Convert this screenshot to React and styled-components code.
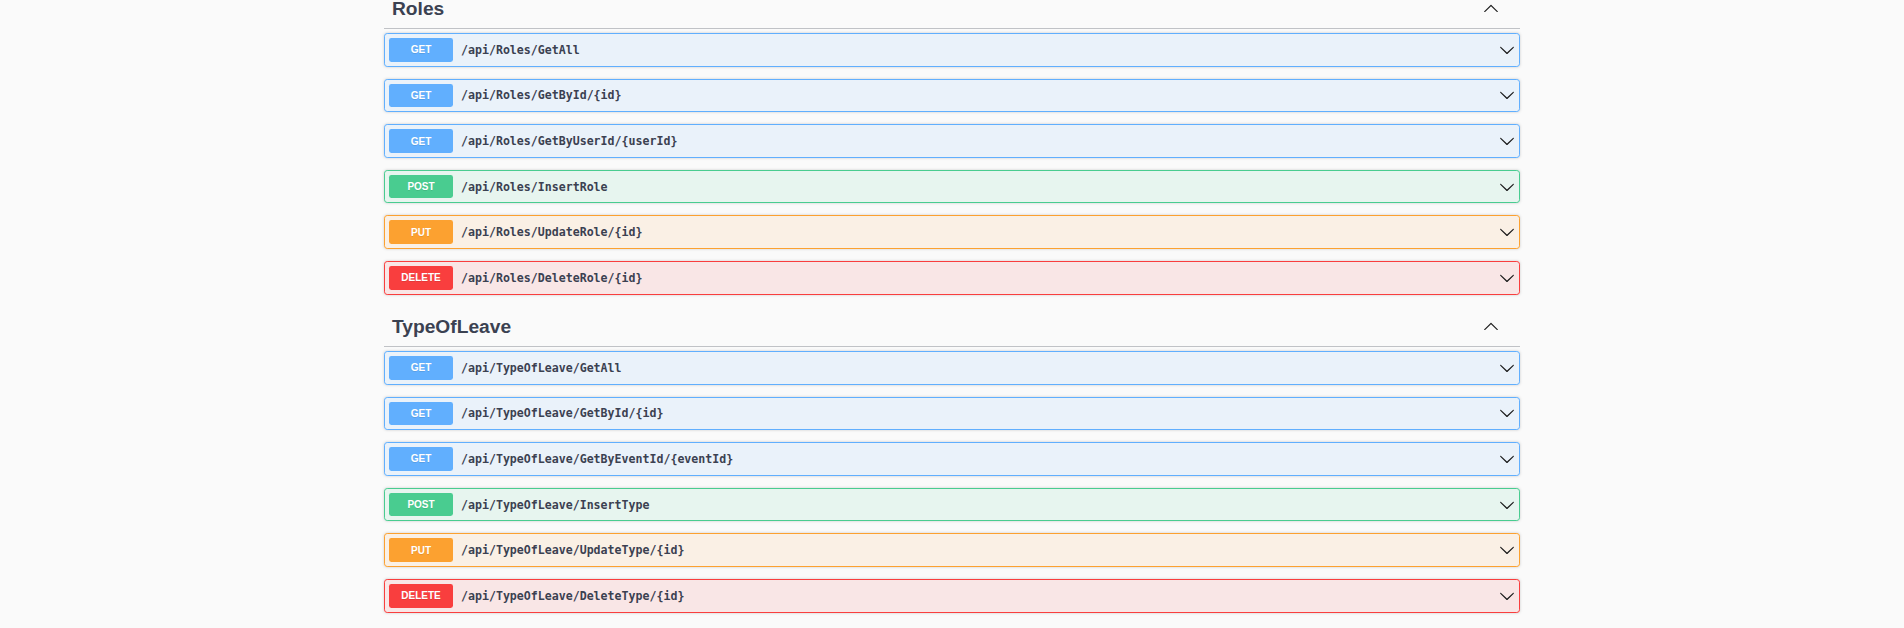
import React from "react";
import styled, { createGlobalStyle } from "styled-components";

const GlobalStyle = createGlobalStyle`
  html, body {
    margin: 0;
    padding: 0;
    background: #fafafa;
    overflow: hidden;
  }
  * { box-sizing: border-box; }
`;

const METHODS = {
  GET: { main: "#61affe", bg: "rgba(97,175,254,.1)" },
  POST: { main: "#49cc90", bg: "rgba(73,204,144,.1)" },
  PUT: { main: "#fca130", bg: "rgba(252,161,48,.1)" },
  DELETE: { main: "#f93e3e", bg: "rgba(249,62,62,.1)" },
};

const Wrapper = styled.div`
  max-width: 1136px;
  margin: -11.4px auto 0;
`;

const TagSection = styled.section`
  display: flex;
  flex-direction: column;
`;

const TagHeader = styled.h3`
  display: flex;
  align-items: center;
  margin: 0 0 4px;
  padding: 8px 16px 8px 8px;
  border-bottom: 1px solid rgba(59, 65, 81, 0.3);
  font-family: "Liberation Sans", Arial, sans-serif;
  font-size: 19.2px;
  font-weight: 700;
  line-height: 23.4px;
  color: #3b4151;
`;

const TagTitle = styled.span`
  flex: 1;
`;

const ArrowButton = styled.button`
  display: flex;
  align-items: center;
  justify-content: center;
  padding: 0;
  margin: 0 ${(p) => p.$mr || 0}px 0 0;
  border: none;
  background: none;
  color: #1b1b1b;
  cursor: pointer;

  svg {
    width: 16px;
    height: 16px;
    fill: currentColor;
  }
`;

const OpBlock = styled.div`
  height: 33.6px;
  margin: 0 0 12px;
  border: 1px solid ${(p) => METHODS[p.$method].main};
  border-radius: 3.2px;
  background: ${(p) => METHODS[p.$method].bg};
  box-shadow: 0 0 3px rgba(0, 0, 0, 0.19);
`;

const Summary = styled.div`
  display: flex;
  align-items: center;
  height: 100%;
  padding: 4px;
  cursor: pointer;
`;

const Method = styled.span`
  display: flex;
  align-items: center;
  justify-content: center;
  min-width: 64px;
  height: 100%;
  border-radius: 2.4px;
  background: ${(p) => METHODS[p.$method].main};
  color: #fff;
  font-family: "Liberation Sans", Arial, sans-serif;
  font-size: 10px;
  font-weight: 700;
  text-shadow: 0 1px 0 rgba(0, 0, 0, 0.1);
`;

const Path = styled.span`
  padding: 0 8px;
  font-family: "DejaVu Sans Mono", "Liberation Mono", monospace;
  font-size: 11.6px;
  font-weight: 700;
  color: #3b4151;
  white-space: nowrap;
`;

const Spacer = styled.div`
  flex: 1;
`;

const ChevronDown = () => (
  <svg viewBox="0 0 20 20" aria-hidden="true">
    <path d="M17.418 6.109c.272-.268.709-.268.979 0s.271.701 0 .969l-7.908 7.83c-.27.268-.707.268-.979 0l-7.908-7.83c-.27-.268-.27-.701 0-.969.271-.268.709-.268.979 0L10 13.25l7.418-7.141z" />
  </svg>
);

const ChevronUp = () => (
  <svg viewBox="0 0 20 20" aria-hidden="true">
    <path d="M17.418 14.908c.272.268.709.268.979 0s.271-.701 0-.969l-7.908-7.83c-.27-.268-.707-.268-.979 0l-7.908 7.83c-.27.268-.27.701 0 .969.271.268.709.268.979 0L10 7.749l7.418 7.159z" />
  </svg>
);

const sections = [
  {
    name: "Roles",
    ops: [
      ["GET", "/api/Roles/GetAll"],
      ["GET", "/api/Roles/GetById/{id}"],
      ["GET", "/api/Roles/GetByUserId/{userId}"],
      ["POST", "/api/Roles/InsertRole"],
      ["PUT", "/api/Roles/UpdateRole/{id}"],
      ["DELETE", "/api/Roles/DeleteRole/{id}"],
    ],
  },
  {
    name: "TypeOfLeave",
    ops: [
      ["GET", "/api/TypeOfLeave/GetAll"],
      ["GET", "/api/TypeOfLeave/GetById/{id}"],
      ["GET", "/api/TypeOfLeave/GetByEventId/{eventId}"],
      ["POST", "/api/TypeOfLeave/InsertType"],
      ["PUT", "/api/TypeOfLeave/UpdateType/{id}"],
      ["DELETE", "/api/TypeOfLeave/DeleteType/{id}"],
    ],
  },
];

export default function App() {
  return (
    <>
      <GlobalStyle />
      <Wrapper>
        {sections.map((s) => (
          <TagSection key={s.name}>
            <TagHeader>
              <TagTitle>{s.name}</TagTitle>
              <ArrowButton $mr={5} aria-label="collapse">
                <ChevronUp />
              </ArrowButton>
            </TagHeader>
            {s.ops.map(([m, p]) => (
              <OpBlock key={p} $method={m}>
                <Summary>
                  <Method $method={m}>{m}</Method>
                  <Path>{p}</Path>
                  <Spacer />
                  <ArrowButton aria-label="expand">
                    <ChevronDown />
                  </ArrowButton>
                </Summary>
              </OpBlock>
            ))}
          </TagSection>
        ))}
      </Wrapper>
    </>
  );
}
